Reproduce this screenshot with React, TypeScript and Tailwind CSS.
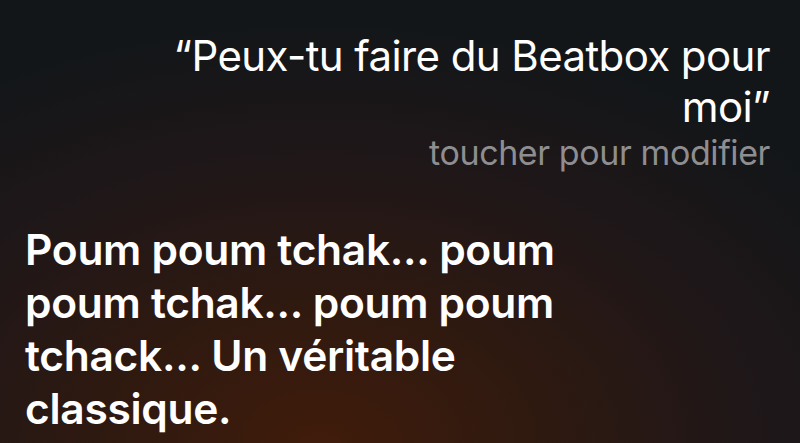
const answer = [
  'Poum poum tchak... poum',
  'poum tchak... poum poum',
  'tchack... Un véritable',
  'classique.',
];

function App() {
  return (
    <div className="h-[443px] w-full overflow-hidden bg-[#131619] bg-[radial-gradient(ellipse_80%_95%_at_40%_100%,#401c0b_0%,#2e1910_35%,#201718_65%,#131619_100%)] font-['Inter',sans-serif] text-white">
      <div className="flex flex-col items-end pt-[30px] pr-[30px] text-right">
        <p className="text-[42px] leading-[51px] font-normal tracking-[-0.6px]">“Peux-tu faire du Beatbox pour</p>
        <p className="text-[42px] leading-[51px] font-normal tracking-[-0.6px]">moi”</p>
        <p className="mt-[-2px] text-[34px] leading-[46px] text-[#8e8e90] tracking-[-0.4px]">toucher pour modifier</p>
      </div>
      <div className="pt-[47px] pl-[25px]">
        {answer.map((line) => (
          <p key={line} className="text-[42.5px] leading-[53px] font-semibold tracking-[-0.3px]">
            {line}
          </p>
        ))}
      </div>
    </div>
  );
}

export default App;
